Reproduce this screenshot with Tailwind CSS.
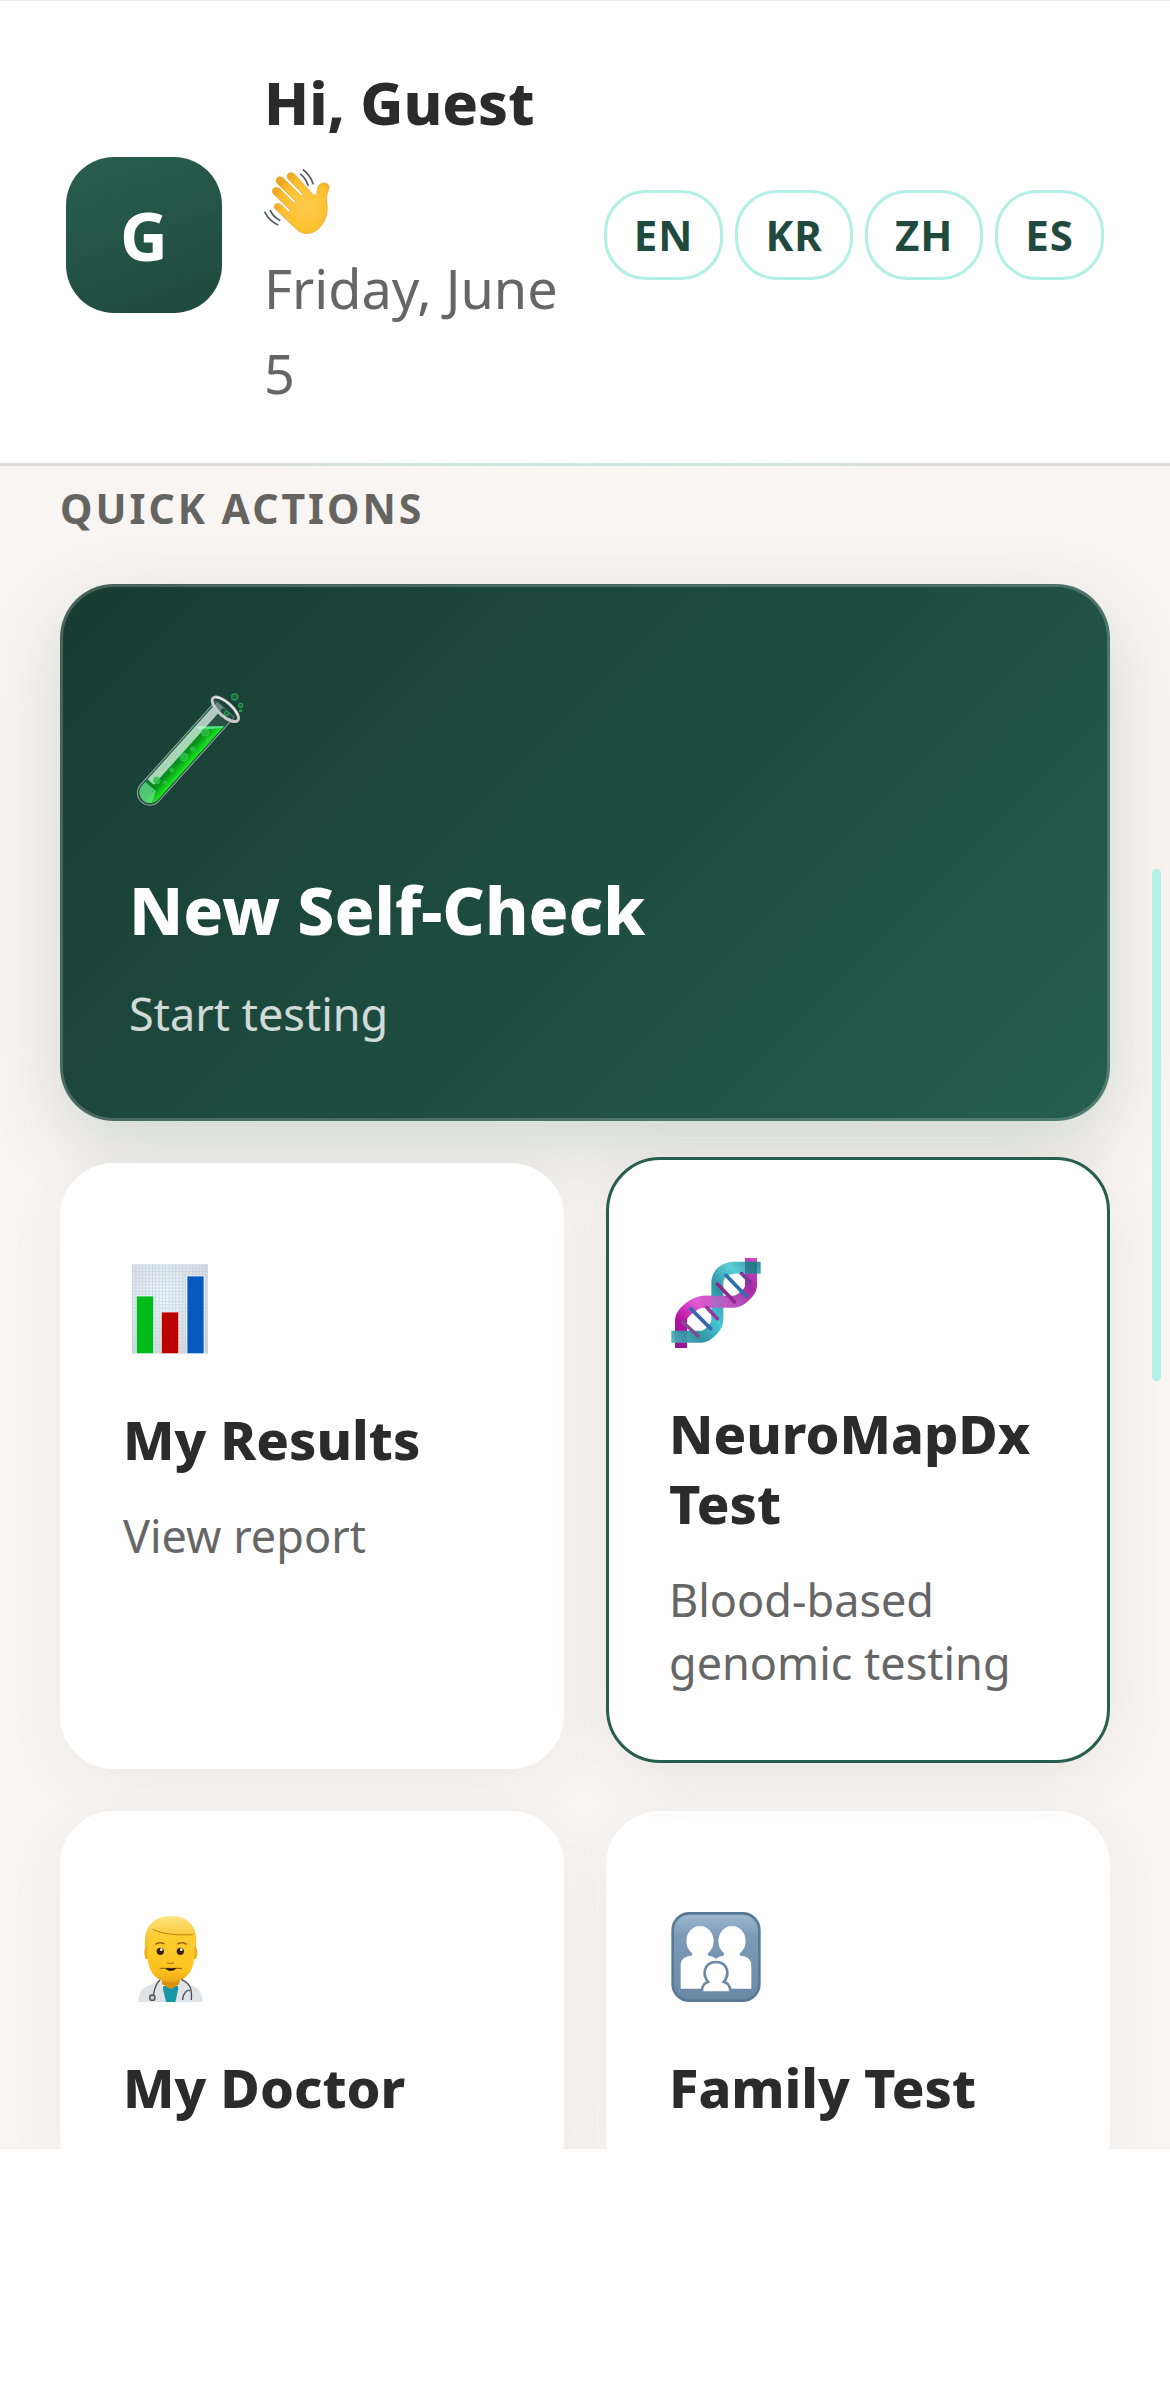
<!DOCTYPE html>
<html lang="en">
<head>
  <meta charset="UTF-8" />
  <meta name="viewport" content="width=device-width, initial-scale=1.0" />
  <title>Home</title>
  <script src="https://cdn.jsdelivr.net/npm/@tailwindcss/browser@4"></script>
</head>
<body class="font-['Noto_Sans',sans-serif] bg-[#fefefe] text-[#2b2b2b]">
<div class="relative flex flex-col h-screen border-t border-[#eeeeee]">

  <!-- Header -->
  <header class="relative z-10 flex items-center justify-between gap-6 bg-[#fefefe] px-[66px] pt-[53px] pb-[47px]">
    <div class="flex flex-1 min-w-0 items-center gap-[42px]">
      <div class="flex size-[156px] shrink-0 items-center justify-center rounded-[48px] bg-linear-160 from-[#285e4e] to-[#1f4a3d] text-[66px] font-bold text-white">G</div>
      <div class="min-w-0">
        <h1 class="text-[59px] leading-[96px] font-extrabold">Hi, Guest
          <svg class="inline-block size-[68px] align-[-15px]" viewBox="45 54 204 204" role="img" aria-label="Waving hand">
            <defs>
              <radialGradient id="skin" cx="0.6" cy="0.55" r="0.6">
                <stop offset="0" stop-color="#ffcb4f" />
                <stop offset="0.7" stop-color="#fcc02e" />
                <stop offset="1" stop-color="#eda61f" />
              </radialGradient>
            </defs>
            <path d="M126 222 L80 178 C68 166 84 154 96 164 L118 185 C122 188 126 184 123 180 L74 132 C63 120 78 105 92 116 L134 158 C138 161 142 157 139 153 L85 101 C75 88 90 73 103 85 L155 136 C159 139 163 135 160 131 L117 86 C108 73 125 61 137 73 L184 125 C195 137 202 141 204 127 L207 112 C211 95 241 94 240 112 C239 124 231 137 232 151 C238 178 234 206 218 226 C198 252 170 257 149 243 Z" fill="url(#skin)" stroke="#e39d22" stroke-width="2" />
            <g fill="none" stroke="#555a60" stroke-width="5" stroke-linecap="round">
              <path d="M163 60 Q184 75 192 101" />
              <path d="M155 73 Q170 84 177 106" />
              <path d="M64 182 Q72 200 92 211" />
              <path d="M48 187 Q60 212 86 224" />
            </g>
          </svg>
        </h1>
        <p class="text-[54px] leading-[85px] text-[#666666]">Friday, June 5</p>
      </div>
    </div>

    <!-- Language switcher -->
    <div class="flex shrink-0 gap-3 text-[42px] leading-[60px] font-bold text-[#1f4a3d]">
      <button type="button" class="rounded-[42px] border-3 border-[#b2efe4] bg-white px-[27px] py-3 tracking-[1px]">EN</button>
      <button type="button" class="rounded-[42px] border-3 border-[#b2efe4] bg-white px-[27px] py-3 tracking-[1px]">KR</button>
      <button type="button" class="rounded-[42px] border-3 border-[#b2efe4] bg-white px-[27px] py-3 tracking-[1px]">ZH</button>
      <button type="button" class="rounded-[42px] border-3 border-[#b2efe4] bg-white px-[27px] py-3 tracking-[1px]">ES</button>
    </div>
  </header>
  <div class="relative z-10 h-[3px] shrink-0 bg-linear-to-r from-[#dcdcda] from-20% via-[#c8e8e0] to-[#dcdcda] to-80%"></div>

  <!-- Scrolling content -->
  <main class="flex-1 min-h-0 overflow-hidden bg-[#f9f5f2] px-[60px] pt-[18px]">
    <h2 class="mb-[52px] text-[41px] leading-[48px] font-bold tracking-[3px] text-[#666461]">QUICK ACTIONS</h2>

    <div class="grid grid-cols-2 gap-[42px]">

      <!-- New Self-Check -->
      <a href="#" class="col-span-2 flex flex-col rounded-[54px] border-3 border-white/20 bg-linear-135 from-[#183c32] via-[#1e4c40] to-[#265d4e] bg-origin-border px-[66px] pt-[103px] pb-[73px] shadow-[0_24px_72px_rgba(27,77,62,0.18)]">
        <svg class="mb-[56px] size-[120px]" viewBox="27 30 360 360" aria-hidden="true">
          <defs>
            <linearGradient id="liquid" x1="0" y1="0" x2="1" y2="0">
              <stop offset="0" stop-color="#067a26" />
              <stop offset="0.55" stop-color="#08921c" />
              <stop offset="1" stop-color="#18ea1c" />
            </linearGradient>
          </defs>
          <g transform="translate(316 88) rotate(42)">
            <path d="M-38 0 V338 A37 37 0 0 0 36 338 V0 Z" fill="#a9c4bb" fill-opacity="0.12" stroke="#8fa8a0" stroke-width="3" />
            <path d="M-33 99 L31 40 V336 A32 32 0 0 1 -33 336 Z" fill="url(#liquid)" />
            <path d="M-33 99 L31 40 L31 46 L-12 94 Z" fill="#54e489" />
            <path d="M-33 0 H-8 V312 H-33 Z" fill="#dff1ea" fill-opacity="0.75" />
            <path d="M-33 322 H10 L24 356 A32 32 0 0 1 -33 336 Z" fill="#7be9a4" fill-opacity="0.65" />
            <ellipse cx="0" cy="0" rx="50" ry="20" fill="#1d463b" fill-opacity="0.5" stroke="#c9c9cb" stroke-width="9" />
            <path d="M-46 -6 A50 20 0 0 1 40 -12" fill="none" stroke="#f5f5f5" stroke-width="3" />
          </g>
          <g fill="#2cc046" fill-opacity="0.8" stroke="#67e27c" stroke-opacity="0.4" stroke-width="2">
            <circle cx="255" cy="157" r="12" />
            <circle cx="265" cy="180" r="6" />
            <circle cx="218" cy="207" r="7" />
            <circle cx="192" cy="231" r="12" />
            <circle cx="155" cy="270" r="6" />
            <circle cx="110" cy="301" r="11" />
            <circle cx="135" cy="307" r="5" />
            <circle cx="98" cy="335" r="4" />
          </g>
          <g fill="#155c35" stroke="#289a4d" stroke-width="4">
            <circle cx="344" cy="51" r="9" />
            <circle cx="362" cy="76" r="6" />
            <circle cx="362" cy="92" r="3" />
            <circle cx="320" cy="100" r="6" />
          </g>
        </svg>
        <span class="mb-[30px] text-[66px] leading-[86px] font-extrabold text-white">New Self-Check</span>
        <span class="text-[45px] leading-[63px] text-white/80">Start testing</span>
      </a>

      <!-- My Results -->
      <a href="#" class="flex flex-col rounded-[54px] border-3 border-white bg-[#fefefe] px-[60px] pt-[98px] pb-[66px] shadow-[0_12px_60px_rgba(43,43,43,0.06)]">
        <svg class="mb-[50px] h-[90px] w-[94px]" viewBox="39 72 282 270" aria-hidden="true">
          <defs>
            <pattern id="grid" width="10" height="10" patternUnits="userSpaceOnUse" x="66" y="73">
              <path d="M0 0 H10 M0 0 V10" stroke="#b5cfe4" stroke-width="3" fill="none" />
            </pattern>
            <radialGradient id="paper" cx="0.4" cy="0.35" r="0.8">
              <stop offset="0" stop-color="#eef6fc" />
              <stop offset="1" stop-color="#d2d4d8" />
            </radialGradient>
          </defs>
          <rect x="66" y="73" width="228" height="268" fill="url(#paper)" />
          <rect x="66" y="73" width="228" height="268" fill="url(#grid)" />
          <g stroke="#ffffff" stroke-opacity="0.7" stroke-width="3">
            <rect x="79" y="168" width="52" height="173" fill="#04bb1c" />
            <rect x="154" y="216" width="52" height="125" fill="#bd0202" />
            <rect x="231" y="108" width="51" height="233" fill="#0559c0" />
          </g>
        </svg>
        <span class="mb-[30px] text-[54px] leading-[70px] font-extrabold">My Results</span>
        <span class="text-[45px] leading-[63px] text-[#666666]">View report</span>
      </a>

      <!-- NeuroMapDx Test -->
      <a href="#" class="flex -translate-y-[6px] flex-col rounded-[54px] border-3 border-[#285e4e] bg-[#fefefe] px-[60px] pt-[98px] pb-[66px] shadow-[0_12px_60px_rgba(43,43,43,0.08)]">
        <svg class="mb-[50px] h-[90px] w-[94px]" viewBox="57 54 282 270" aria-hidden="true">
          <defs>
            <linearGradient id="teal" gradientUnits="userSpaceOnUse" x1="332" y1="60" x2="64" y2="310">
              <stop offset="0" stop-color="#26808f" />
              <stop offset="0.22" stop-color="#4fcbd4" />
              <stop offset="0.42" stop-color="#218c9c" />
              <stop offset="0.6" stop-color="#35c3d2" />
              <stop offset="0.8" stop-color="#258b98" />
              <stop offset="1" stop-color="#4cb5bd" />
            </linearGradient>
            <linearGradient id="pink" gradientUnits="userSpaceOnUse" x1="320" y1="54" x2="75" y2="324">
              <stop offset="0" stop-color="#d24bc9" />
              <stop offset="0.22" stop-color="#a92aa6" />
              <stop offset="0.38" stop-color="#b551b8" />
              <stop offset="0.6" stop-color="#e35bd6" />
              <stop offset="0.8" stop-color="#b9109f" />
              <stop offset="1" stop-color="#8d1a8f" />
            </linearGradient>
          </defs>
          <g fill="none" stroke-width="36">
            <path d="M303 54 V138 C303 155 270 185 252 185 H162 C135 185 93 218 93 240 V324" stroke="url(#pink)" />
            <path d="M332 83 H252 C225 83 202 100 202 130 V240 C202 258 175 290 155 290 H64" stroke="url(#teal)" stroke-opacity="0.93" />
          </g>
          <path d="M160 167 H222 V203 H150 Z" fill="#d456c8" fill-opacity="0.75" />
          <g stroke-width="11" stroke-linecap="round">
            <path d="M202 132 L254 186" stroke="#8d2a92" />
            <path d="M228 106 L288 168" stroke="#2c6fae" />
            <path d="M274 100 L302 128" stroke="#7a3c9c" />
            <path d="M98 246 L144 288" stroke="#7b4a94" />
            <path d="M122 206 L182 266" stroke="#3a66b0" />
            <path d="M170 202 L202 236" stroke="#93379f" />
          </g>
          <rect x="285" y="65" width="36" height="36" fill="#1f6f82" fill-opacity="0.7" />
        </svg>
        <span class="mb-[30px] text-[54px] leading-[70px] font-extrabold">NeuroMapDx Test</span>
        <span class="text-[45px] leading-[63px] text-[#666666]">Blood-based genomic testing</span>
      </a>

      <!-- My Doctor -->
      <a href="#" class="flex flex-col rounded-[54px] border-3 border-white bg-[#fefefe] px-[60px] pt-[98px] pb-[66px] shadow-[0_12px_60px_rgba(43,43,43,0.06)]">
        <svg class="mb-[50px] h-[90px] w-[94px]" viewBox="39 36 282 270" aria-hidden="true">
          <defs>
            <linearGradient id="face" x1="0" y1="0" x2="0" y2="1">
              <stop offset="0" stop-color="#ffd23a" />
              <stop offset="0.8" stop-color="#fcc21d" />
              <stop offset="1" stop-color="#eda816" />
            </linearGradient>
            <linearGradient id="hair" x1="0" y1="0" x2="0" y2="1">
              <stop offset="0" stop-color="#ffe680" />
              <stop offset="1" stop-color="#f6b50f" />
            </linearGradient>
          </defs>
          <path d="M160 258 H204 L216 306 H150 Z" fill="#1599a6" />
          <path d="M155 220 H209 V252 L182 268 L155 252 Z" fill="#d9930f" />
          <path d="M84 306 C86 270 104 260 128 252 L152 236 L168 306 Z" fill="#dfe3e6" />
          <path d="M278 306 C276 270 260 260 236 252 L212 236 L196 306 Z" fill="#dfe3e6" />
          <ellipse cx="111" cy="158" rx="8" ry="20" fill="#efac17" />
          <ellipse cx="254" cy="158" rx="8" ry="20" fill="#efac17" />
          <path d="M112 110 C112 60 253 60 253 110 V160 C253 218 225 246 182 246 C139 246 112 218 112 160 Z" fill="url(#face)" />
          <path d="M107 146 C96 82 130 48 184 48 C238 48 268 84 257 146 C252 130 252 116 250 106 C210 110 165 106 136 88 C122 98 116 114 112 140 Z" fill="url(#hair)" />
          <path d="M128 88 C160 104 204 106 250 104" fill="none" stroke="#b5830f" stroke-width="3" />
          <g fill="none" stroke="#9a680f" stroke-width="5" stroke-linecap="round">
            <path d="M138 132 Q150 125 162 131" />
            <path d="M204 131 Q216 125 228 132" />
          </g>
          <circle cx="151" cy="154" r="11" fill="#3a210c" />
          <circle cx="211" cy="154" r="11" fill="#3a210c" />
          <circle cx="154" cy="149" r="4" fill="#ffffff" />
          <circle cx="214" cy="149" r="4" fill="#ffffff" />
          <path d="M172 188 Q181 194 191 188" fill="none" stroke="#b8780d" stroke-width="4" />
          <path d="M149 205 H216" stroke="#8f5d10" stroke-width="3" />
          <path d="M168 206 Q182 217 197 206 Z" fill="#1f0e05" stroke="#1f0e05" stroke-width="2" />
          <g fill="none" stroke="#4a5257" stroke-width="4">
            <path d="M150 240 C134 254 134 270 130 286" />
            <path d="M214 238 C244 252 246 270 244 300" />
            <path d="M218 300 C218 280 232 268 240 272" />
            <circle cx="127" cy="293" r="8" fill="#c5cace" />
          </g>
        </svg>
        <span class="text-[54px] leading-[70px] font-extrabold">My Doctor</span>
      </a>

      <!-- Family Test -->
      <a href="#" class="flex flex-col rounded-[54px] border-3 border-white bg-[#fefefe] px-[60px] pt-[98px] pb-[66px] shadow-[0_12px_60px_rgba(43,43,43,0.06)]">
        <svg class="mb-[50px] h-[90px] w-[94px]" viewBox="57 66 282 270" aria-hidden="true">
          <defs>
            <linearGradient id="tile" x1="0" y1="0" x2="0" y2="1">
              <stop offset="0" stop-color="#a0b9d0" />
              <stop offset="0.25" stop-color="#7d9ab7" />
              <stop offset="1" stop-color="#6988a6" />
            </linearGradient>
          </defs>
          <rect x="68" y="70" width="260" height="262" rx="50" fill="url(#tile)" stroke="#587894" stroke-width="8" />
          <g fill="#ffffff">
            <ellipse cx="150" cy="153" rx="41" ry="45" />
            <ellipse cx="246" cy="153" rx="41" ry="45" />
            <path d="M92 296 V228 C92 205 106 198 125 197 L132 180 H168 L176 197 Q190 198 198 206 Q206 198 220 197 L228 180 H264 L271 197 C290 198 304 205 304 228 V296 Z" />
          </g>
          <g fill="#ffffff" stroke="#6c8aa8" stroke-width="16" paint-order="stroke">
            <path d="M160 304 C160 288 166 280 182 278 C158 256 166 220 198 220 C230 220 238 256 214 278 C230 280 237 288 237 304 Z" />
          </g>
        </svg>
        <span class="text-[54px] leading-[70px] font-extrabold">Family Test</span>
      </a>
    </div>
  </main>

  <!-- Scroll thumb -->
  <div class="absolute top-[868px] right-[9px] h-[512px] w-[9px] rounded-full bg-[#b2efe4]"></div>

  <!-- Bottom safe area -->
  <footer class="h-[243px] shrink-0 bg-[#fefefe]"></footer>
</div>
</body>
</html>
